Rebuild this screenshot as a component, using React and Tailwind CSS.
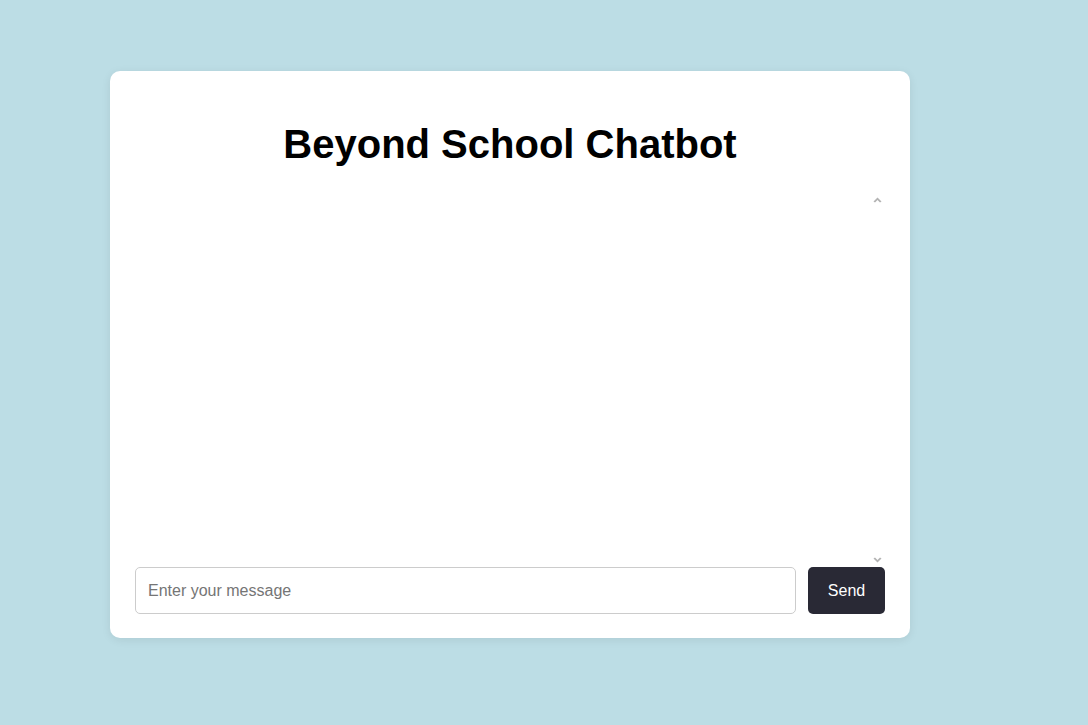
import React, { useState } from 'react';

const App = () => {
    const [message, setMessage] = useState('');

    return (
        <div className="min-h-screen w-full bg-[#bcdde5] pt-[71px] pl-[110px]" style={{ fontFamily: '"Liberation Sans", Arial, sans-serif' }}>
            <div className="w-[800px] h-[567px] bg-white rounded-[10px] shadow-[0_2px_10px_rgba(0,0,0,0.08)] px-[25px] pb-[24px] flex flex-col">
                <h1 className="text-[40px] font-bold text-black text-center leading-none pt-[53px] pb-[31px]">
                    Beyond School Chatbot
                </h1>

                {/* message list with scroll arrows */}
                <div className="flex-1 flex">
                    <div className="flex-1"></div>
                    <div className="w-[15px] flex flex-col justify-between items-center pt-[2px] pb-[2px] pr-[1px]">
                        <svg width="9" height="6" viewBox="0 0 9 6" fill="#b3b3b3"><path d="M4.5 0.5 L8.5 4.5 L7 5.5 L4.5 3 L2 5.5 L0.5 4.5 Z" /></svg>
                        <svg width="9" height="6" viewBox="0 0 9 6" fill="#b3b3b3"><path d="M4.5 5.5 L8.5 1.5 L7 0.5 L4.5 3 L2 0.5 L0.5 1.5 Z" /></svg>
                    </div>
                </div>

                <div className="flex gap-3 mt-[2px]">
                    <input
                        value={message}
                        onChange={(e) => setMessage(e.target.value)}
                        placeholder="Enter your message"
                        className="flex-1 h-[47px] border border-[#cccccc] rounded-[5px] px-3 text-base text-black placeholder:text-[#757575] outline-none"
                    />
                    <button className="w-[77px] h-[47px] bg-[#292935] text-white text-base rounded-[5px]">Send</button>
                </div>
            </div>
        </div>
    );
};

export default App;
